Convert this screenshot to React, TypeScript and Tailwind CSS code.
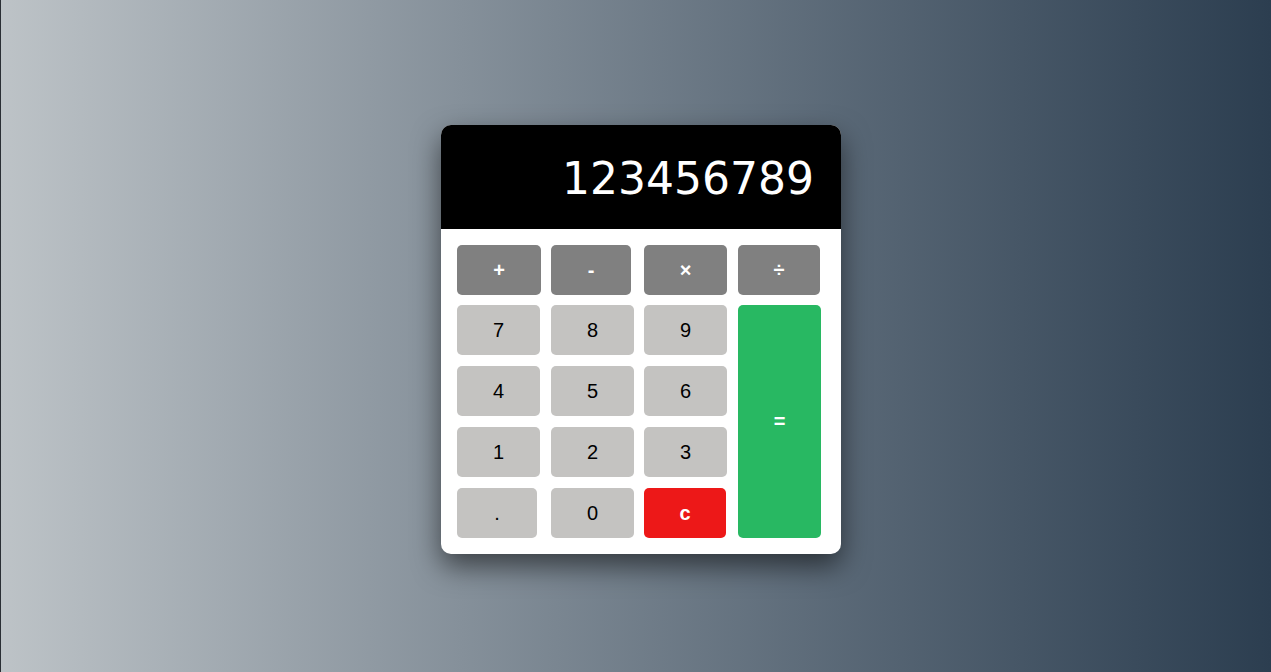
import React from 'react';

type Key = {
  label: string;
  w: string;
  kind: 'op' | 'num' | 'clear';
};

const rows: { mt: string; keys: Key[] }[] = [
  {
    mt: 'mt-0',
    keys: [
      { label: '7', w: 'w-[83px]', kind: 'num' },
      { label: '8', w: 'w-[83px]', kind: 'num' },
      { label: '9', w: 'w-[83px]', kind: 'num' },
    ],
  },
  {
    mt: 'mt-[11px]',
    keys: [
      { label: '4', w: 'w-[83px]', kind: 'num' },
      { label: '5', w: 'w-[83px]', kind: 'num' },
      { label: '6', w: 'w-[83px]', kind: 'num' },
    ],
  },
  {
    mt: 'mt-[11px]',
    keys: [
      { label: '1', w: 'w-[83px]', kind: 'num' },
      { label: '2', w: 'w-[83px]', kind: 'num' },
      { label: '3', w: 'w-[83px]', kind: 'num' },
    ],
  },
  {
    mt: 'mt-[11px]',
    keys: [
      { label: '.', w: 'w-[80px] mr-[14px]', kind: 'num' },
      { label: '0', w: 'w-[83px]', kind: 'num' },
      { label: 'c', w: 'w-[82px]', kind: 'clear' },
    ],
  },
];

const kindClass = {
  op: 'bg-[#808080] text-white font-bold',
  num: 'bg-[#c4c3c1] text-black',
  clear: 'bg-[#ed1818] text-white font-bold',
};

function Button({ k }: { k: Key }) {
  return (
    <button
      className={`${k.w} ${kindClass[k.kind]} h-[50px] rounded-[5px] text-[20px] flex items-center justify-center`}
    >
      {k.label}
    </button>
  );
}

export default function App() {
  return (
    <div className="h-[672px] w-full flex items-center justify-center bg-gradient-to-r from-[#bdc3c7] to-[#2c3e50] border-l border-[#2a2f35] font-['Liberation_Sans',Arial,sans-serif]">
      <div className="w-[400px] ml-[10px] mt-[6px] rounded-[10px] overflow-hidden bg-white shadow-[0_12px_28px_rgba(0,0,0,0.55)]">
        {/* display */}
        <div className="h-[104px] bg-black flex items-center justify-end pr-[27px] pt-[4px]">
          <span className="text-white text-[44px] font-['DejaVu_Sans',Verdana,sans-serif]">123456789</span>
        </div>

        {/* keypad */}
        <div className="px-4 pt-4 pb-4">
          <div className="flex h-[50px]">
            <Button k={{ label: '+', w: 'w-[84px] mr-[10px]', kind: 'op' }} />
            <Button k={{ label: '-', w: 'w-[80px] mr-[13px]', kind: 'op' }} />
            <Button k={{ label: '×', w: 'w-[83px] mr-[11px]', kind: 'op' }} />
            <Button k={{ label: '÷', w: 'w-[82px]', kind: 'op' }} />
          </div>
          <div className="flex mt-[10px]">
            <div className="flex flex-col w-[270px]">
              {rows.map((r, i) => (
                <div key={i} className={`flex ${r.mt}`}>
                  {r.keys.map((k, j) => (
                    <div key={j} className={j === 0 && k.label !== '.' ? 'mr-[11px]' : j === 1 ? 'mr-[10px]' : ''}>
                      <Button k={k} />
                    </div>
                  ))}
                </div>
              ))}
            </div>
            <button className="ml-[11px] w-[83px] rounded-[5px] bg-[#28b862] text-white font-bold text-[20px] flex items-center justify-center">
              =
            </button>
          </div>
        </div>
      </div>
    </div>
  );
}
